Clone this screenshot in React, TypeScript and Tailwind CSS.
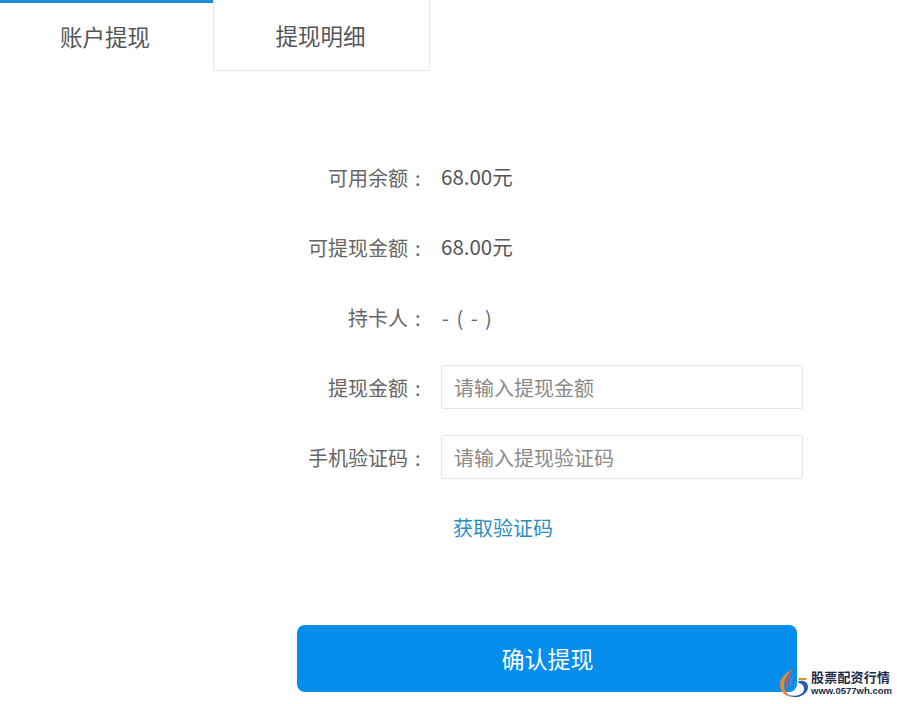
const FONT = 'font-["Microsoft_YaHei","Noto_Sans_CJK_SC",sans-serif]';

function Row({ label, children }: { label: string; children: React.ReactNode }) {
  return (
    <div className="flex items-center h-[44px] mb-[26px]">
      <div className="w-[441px] pr-[16px] text-right text-[20px] text-[#666] whitespace-nowrap">
        {label}
        <span className="inline-block w-[10px] text-left ml-[7px]">:</span>
      </div>
      {children}
    </div>
  );
}

function Field({ placeholder }: { placeholder: string }) {
  return (
    <input
      placeholder={placeholder}
      className="w-[362px] h-[44px] mb-[2px] pl-[12px] pr-[14px] text-[20px] border border-[#e4e4e4] rounded-[2px] outline-none placeholder:text-[#8a8a8a]"
    />
  );
}

function Watermark() {
  return (
    <div className="absolute left-[780px] top-[668px] flex items-center">
      <svg width="28" height="30" viewBox="0 0 28 30" fill="none">
        <path d="M13 1C5 5 0 10 0 17c0 7 6 12 13 12-5-2-9-6-9-12C4 11 8 6 13 1z" fill="#e38b2f" />
        <path d="M13 3C8 7 5 12 6 18c.4 2 1 3 2 4-1-7 1-13 5-19z" fill="#d9523d" />
        <path d="M14 6c-3 3-4 7-4 11 0 1 0 2 .5 3 0-5 1-10 3.500-14z" fill="#9a7fb8" />
        <path d="M17 12c-2 2-3 5-2 8-.2-3 .5-5.500 2-8z" fill="#7fb2d9" />
        <path d="M18 10h9l-1 2h-7z" fill="#e38b2f" />
        <path d="M19 13c5-1 9 1 9 6 0 6-7 11-14 10-2-.3-4-1-5-2 6 2 15 0 15-6 0-4-3-6-6-6l1-2z" fill="#2c5da8" />
      </svg>
      <div className="ml-[3px] flex flex-col leading-none">
        <span className="text-[13px] font-bold text-[#1c2a4a] tracking-[0.2px]">股票配资行情</span>
        <span className="mt-[3px] text-[9.5px] font-bold text-[#1c2a4a] font-['Liberation_Sans',sans-serif]">www.0577wh.com</span>
      </div>
    </div>
  );
}

export default function App() {
  return (
    <div className={`relative w-[897px] h-[704px] overflow-hidden bg-white ${FONT}`}>
      {/* Tabs */}
      <div className="flex h-[71px]">
        <div className="w-[213px] border-t-[3px] border-[#1a8fd8] flex items-center justify-center text-[22.5px] text-[#555] pr-[3px]">
          账户提现
        </div>
        <div className="w-[217px] border-x border-b border-[#e8e8e8] flex items-center justify-center text-[22.5px] text-[#555] pt-[1px] pr-[2px]">
          提现明细
        </div>
      </div>

      {/* Form */}
      <div className="pt-[85px]">
        <Row label="可用余额">
          <span className="mb-[4px] text-[20.5px] text-[#555]">68.00元</span>
        </Row>
        <Row label="可提现金额">
          <span className="mb-[4px] text-[20.5px] text-[#555]">68.00元</span>
        </Row>
        <Row label="持卡人">
          <span className="ml-[1px] text-[20px] text-[#666] whitespace-pre [word-spacing:3px]">- ( - )</span>
        </Row>
        <Row label="提现金额">
          <Field placeholder="请输入提现金额" />
        </Row>
        <Row label="手机验证码">
          <Field placeholder="请输入提现验证码" />
        </Row>
        <div className="flex items-center h-[44px] pl-[453px] text-[20px] text-[#2a8fc0]">获取验证码</div>
        <button className="block ml-[297px] mt-[75px] w-[500px] h-[67px] pl-[1px] rounded-[8px] bg-[#058ded] text-white text-[23px]">
          确认提现
        </button>
      </div>

      <Watermark />
    </div>
  );
}
